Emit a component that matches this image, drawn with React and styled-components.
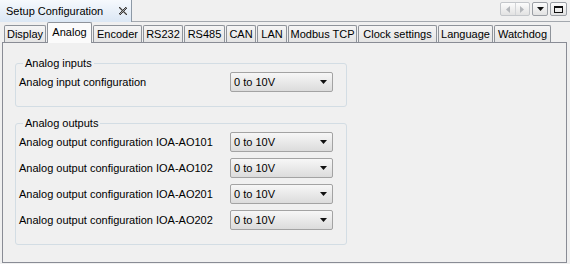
import React from "react";
import styled, { createGlobalStyle } from "styled-components";

const GlobalStyle = createGlobalStyle`
  html, body {
    margin: 0;
    padding: 0;
    background: #f0f0f0;
  }
  body {
    font-family: "Liberation Sans", Arial, sans-serif;
    font-size: 11px;
    color: #000;
  }
`;

const Window = styled.div`
  width: 570px;
  height: 264px;
  display: flex;
  flex-direction: column;
  box-sizing: border-box;
`;

const TitleStrip = styled.div`
  display: flex;
  height: 22px;
  flex-shrink: 0;
`;

const TitleTab = styled.div`
  box-sizing: border-box;
  width: 132px;
  height: 22px;
  display: flex;
  align-items: center;
  padding: 0 4px 1px 6px;
  background: linear-gradient(#f6f9fd, #dbe7f4);
  border-right: 1px solid #8d99a6;
  font-size: 11px;
`;

const CloseIcon = styled.svg`
  margin-left: auto;
  margin-top: 1px;
`;

const StripRest = styled.div`
  flex: 1;
  display: flex;
  justify-content: flex-end;
  align-items: flex-start;
  gap: 2px;
  padding: 2px 3px 0 0;
  border-bottom: 1px solid #a3a8ae;
`;

const MiniButton = styled.div`
  box-sizing: border-box;
  width: ${({ $w }) => $w}px;
  height: 14px;
  display: flex;
  align-items: center;
  justify-content: center;
  border: 1px solid ${({ $disabled }) => ($disabled ? "#c3c6ca" : "#9a9ea4")};
  border-radius: 2px;
  background: linear-gradient(#fcfcfc, #e2e2e2);
`;

const MiniHalf = styled.div`
  flex: 1;
  height: 100%;
  display: flex;
  align-items: center;
  justify-content: center;
  & + & {
    border-left: 1px solid #d2d4d7;
  }
`;

const Body = styled.div`
  flex: 1;
  display: flex;
  flex-direction: column;
  padding: 0 3px 1px 2px;
`;

const TabRow = styled.div`
  display: flex;
  align-items: flex-end;
  gap: 1px;
  height: 20px;
  padding-left: 2px;
  position: relative;
  z-index: 1;
`;

const Tab = styled.div`
  box-sizing: border-box;
  width: ${({ $w }) => $w}px;
  height: ${({ $active }) => ($active ? 21 : 17)}px;
  margin-bottom: ${({ $active }) => ($active ? -1 : 0)}px;
  padding-bottom: ${({ $active }) => ($active ? 3 : 0)}px;
  display: flex;
  align-items: center;
  justify-content: center;
  border: 1px solid #8e939a;
  border-bottom: none;
  border-radius: 2px 2px 0 0;
  background: ${({ $active }) =>
    $active ? "#fbfbfb" : "linear-gradient(#f5f5f5, #e4e4e4)"};
  white-space: nowrap;
`;

const Panel = styled.div`
  flex: 1;
  border: 1px solid #898c95;
  background: #f0f0f0;
  padding: 14px 0 0 12px;
  display: flex;
  flex-direction: column;
  gap: 10px;
`;

const Group = styled.fieldset`
  box-sizing: border-box;
  width: 332px;
  margin: 0;
  padding: 2px 13px 14px 3px;
  border: 1px solid #d3dde4;
  border-radius: 3px;
`;

const Legend = styled.legend`
  padding: 0 2px;
  margin-left: 4px;
  line-height: 13px;
  font-size: 11px;
`;

const Rows = styled.div`
  display: grid;
  grid-template-columns: 211px 103px;
  row-gap: 6px;
  align-items: center;
`;

const Label = styled.div`
  white-space: nowrap;
`;

const Combo = styled.div`
  box-sizing: border-box;
  height: 20px;
  display: flex;
  align-items: center;
  justify-content: space-between;
  padding: 0 5px 0 3px;
  border: 1px solid #a3a3a3;
  border-radius: 2px;
  background: linear-gradient(#f7f7f7, #dcdcdc);
`;

const tabs = [
  { label: "Display", w: 42 },
  { label: "Analog", w: 45, active: true },
  { label: "Encoder", w: 49 },
  { label: "RS232", w: 40 },
  { label: "RS485", w: 41 },
  { label: "CAN", w: 30 },
  { label: "LAN", w: 30 },
  { label: "Modbus TCP", w: 69 },
  { label: "Clock settings", w: 79 },
  { label: "Language", w: 55 },
  { label: "Watchdog", w: 57 },
];

const outputs = ["IOA-AO101", "IOA-AO102", "IOA-AO201", "IOA-AO202"];

// dithered "x" of the view tab close button
const closeCells = [];
for (let r = 0; r < 8; r++) {
  for (let c = 0; c < 8; c++) {
    if (Math.abs(r - c) <= 1 || Math.abs(r + c - 7) <= 1) {
      closeCells.push([c, r, (r + c) % 2 === 0 ? "#3c3c3c" : "#a8a8a8"]);
    }
  }
}

const Arrow = () => (
  <svg width="7" height="4" viewBox="0 0 7 4">
    <path d="M0 0h7L3.5 4z" fill="#111" />
  </svg>
);

const Select = ({ value }) => (
  <Combo>
    <span>{value}</span>
    <Arrow />
  </Combo>
);

const App = () => {
  return (
    <Window>
      <GlobalStyle />
      <TitleStrip>
        <TitleTab>
          <span>Setup Configuration</span>
          <CloseIcon width="8" height="8" viewBox="0 0 8 8">
            {closeCells.map(([x, y, fill]) => (
              <rect key={`${x}-${y}`} x={x} y={y} width="1" height="1" fill={fill} />
            ))}
          </CloseIcon>
        </TitleTab>
        <StripRest>
          <MiniButton $w={30} $disabled>
            <MiniHalf>
              <svg width="4" height="7" viewBox="0 0 4 7">
                <path d="M4 0v7L0 3.5z" fill="#b4b7bb" />
              </svg>
            </MiniHalf>
            <MiniHalf>
              <svg width="4" height="7" viewBox="0 0 4 7">
                <path d="M0 0v7l4-3.5z" fill="#b4b7bb" />
              </svg>
            </MiniHalf>
          </MiniButton>
          <MiniButton $w={16}>
            <Arrow />
          </MiniButton>
          <MiniButton $w={17}>
            <svg width="9" height="7" viewBox="0 0 9 7">
              <rect x="0.5" y="0.5" width="8" height="6" fill="none" stroke="#111" />
              <rect x="0" y="0" width="9" height="2" fill="#111" />
            </svg>
          </MiniButton>
        </StripRest>
      </TitleStrip>

      <Body>
        <TabRow>
          {tabs.map((t) => (
            <Tab key={t.label} $w={t.w} $active={t.active}>
              {t.label}
            </Tab>
          ))}
        </TabRow>
        <Panel>
          <Group>
            <Legend>Analog inputs</Legend>
            <Rows>
              <Label>Analog input configuration</Label>
              <Select value="0 to 10V" />
            </Rows>
          </Group>
          <Group>
            <Legend>Analog outputs</Legend>
            <Rows>
              {outputs.map((o) => (
                <React.Fragment key={o}>
                  <Label>Analog output configuration {o}</Label>
                  <Select value="0 to 10V" />
                </React.Fragment>
              ))}
            </Rows>
          </Group>
        </Panel>
      </Body>
    </Window>
  );
};

export default App;
